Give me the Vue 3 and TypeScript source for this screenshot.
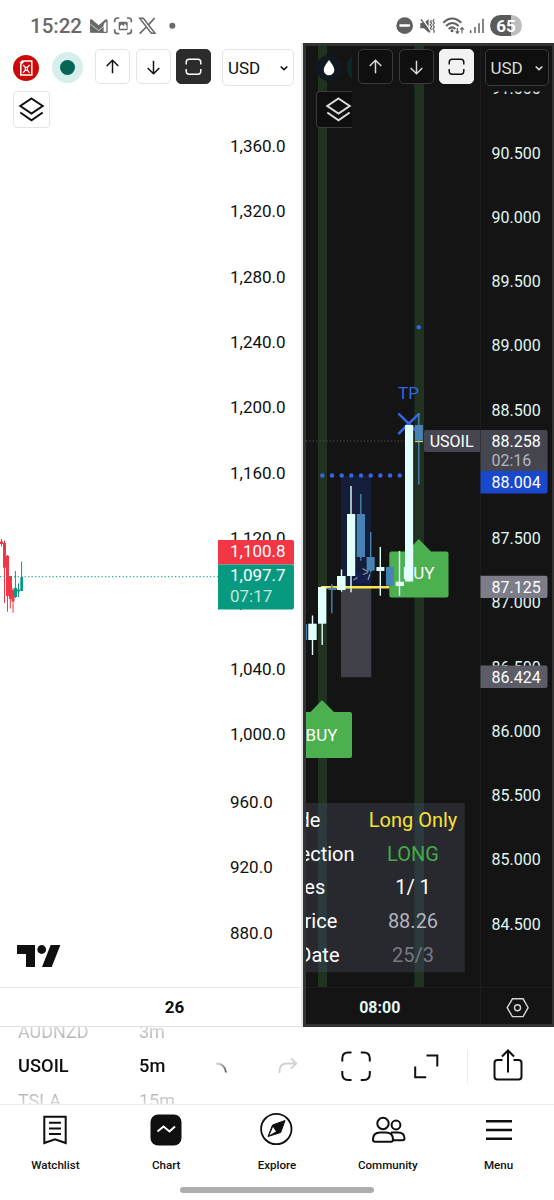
<script setup lang="ts">
interface Label { text: string; y: number }
interface Candle { x: number; left: number; width: number; top: number; bottom: number; high: number; low: number; tone: string }

const label = (text: string, y: number): Label => ({ text, y })
const candle = (x: number, left: number, width: number, top: number, bottom: number, high: number, low: number, tone: string): Candle =>
  ({ x, left, width, top, bottom, high, low, tone })

const goldScale: Label[] = [
  label('1,360.0', 146), label('1,320.0', 211.5), label('1,280.0', 277), label('1,240.0', 342.3),
  label('1,200.0', 407.7), label('1,160.0', 473), label('1,120.0', 538.3), label('1,080.0', 602.3),
  label('1,040.0', 669), label('1,000.0', 734.5), label('960.0', 802), label('920.0', 867.5), label('880.0', 933),
]

const oilScale: Label[] = ['91.000', '90.500', '90.000', '89.500', '89.000', '88.500', '', '87.500', '87.000', '86.500', '86.000', '85.500', '85.000', '84.500']
  .map((text, i) => label(text, 88.8 + i * 64.25))
  .filter((l) => l.text)

const goldCandles: Candle[] = [
  candle(1.5, 0, 3, 541.5, 544, 539, 546.5, 'down'),
  candle(4.5, 3, 3, 543, 567.7, 540.5, 603, 'down'),
  candle(7.5, 6, 3, 555.7, 596, 555, 611.7, 'down'),
  candle(10.3, 9, 3, 576, 599, 576, 608.5, 'down'),
  candle(13, 11.5, 3, 590, 601.5, 588, 612.7, 'down'),
  candle(15.4, 14, 3, 588, 597, 571, 598, 'up'),
  candle(18.5, 17, 3, 589.5, 591.5, 583.5, 597, 'up'),
  candle(21.6, 20.3, 2.7, 577, 591, 561.5, 591, 'up'),
]

const oilCandles: Candle[] = [
  candle(306.4, 306, 0.8, 624, 640, 624, 640, 'blue'),
  candle(312.5, 308.3, 8.4, 623.7, 640, 615.5, 655, 'mint'),
  candle(322.2, 318, 8.3, 587, 623.7, 587, 645, 'mint'),
  candle(331.8, 328.3, 8, 587.7, 590, 584, 613.3, 'blue'),
  candle(341.5, 337, 8.6, 576, 590, 569.5, 591.7, 'mint'),
  candle(351, 347, 8.2, 514, 576, 486, 592.3, 'mint'),
  candle(360.8, 356.8, 8.2, 514, 557, 494, 560.7, 'blue'),
  candle(370.7, 366.6, 8.1, 557, 570.7, 532, 572.7, 'blue'),
  candle(380.3, 376.4, 8, 567, 571, 547, 595.7, 'mint'),
  candle(390, 386, 7.8, 567, 585.7, 567, 585.7, 'blue'),
  candle(399.5, 395.7, 8.3, 581.7, 586, 551, 595.7, 'mint'),
  candle(409, 405, 8.2, 425, 581.5, 425, 581.5, 'mint'),
  candle(418.8, 414.9, 8, 425, 440.5, 413.3, 484.5, 'blue'),
]

const targetDots = Array.from({ length: 9 }, (_, i) => 322.3 + i * 9.68)

const stats = [
  { name: 'Mode', end: 320.3, value: 'Long Only', tone: 'yellow' },
  { name: 'Direction', end: 354.5, value: 'LONG', tone: 'green' },
  { name: 'Trades', end: 325.3, value: '1/ 1', tone: 'white' },
  { name: 'Price', end: 337.3, value: '88.26', tone: 'silver' },
  { name: 'Date', end: 339.5, value: '25/3', tone: 'grey' },
]

const symbols = ['AUDNZD', 'USOIL', 'TSLA']
const intervals = ['3m', '5m', '15m']
const tabs = ['Watchlist', 'Chart', 'Explore', 'Community', 'Menu']
</script>

<template>
  <div class="screen">
    <header class="status">
      <span class="clock">15:22</span>
      <svg class="notices" viewBox="264 30 276 96">
        <path d="M270 98V61q0-4 5-3l21 18 19-17q7-3 8 3v33q0 4-4 4z" fill="#696969" />
        <path d="M311 72v23h8V64z" fill="#fff" />
        <path d="M271 72l25 20 22-19" fill="none" stroke="#fff" stroke-width="2" />
        <g fill="none" stroke="#696969" stroke-width="5">
          <path d="M344 67v-5q0-8 8-8h6M381 54h5q8 0 8 8v5M394 88v5q0 8-8 8h-5M358 101h-6q-8 0-8-8v-5" />
        </g>
        <rect x="356" y="65" width="27" height="26" rx="4" fill="#696969" />
        <path d="M360 86v-7l6-6 5 6 4-9 5 9v7z" fill="#fff" />
        <path d="M419 55h11l35 45h-11z" fill="none" stroke="#696969" stroke-width="4.5" />
        <path d="M464 54l-20 22M439 81l-20 20" stroke="#696969" stroke-width="5" />
        <circle cx="517" cy="77" r="9" fill="#696969" />
      </svg>
      <svg class="signals" viewBox="300 30 270 96">
        <circle cx="326" cy="77" r="25" fill="#5f5f5f" />
        <rect x="310" y="73" width="32" height="7" rx="2" fill="#fff" />
        <path d="M373 69h11l14-12v41l-14-13h-11z" fill="#5f5f5f" />
        <path d="M378 56l27 37" stroke="#fff" stroke-width="4" />
        <path d="M375 58l27 39" stroke="#5f5f5f" stroke-width="4.5" />
        <path d="M407 60l-4 5 4 5-4 5 4 5-4 5 4 5M415 57l-4 6 4 6-4 6 4 6-4 6 4 6-2 5" fill="none" stroke="#5f5f5f" stroke-width="3.5" />
        <g fill="none" stroke="#5f5f5f" stroke-width="6">
          <path d="M442 68q26-25 54 0" />
          <path d="M450 78q19-18 38 0" />
          <path d="M458 87q10-10 20 0" />
        </g>
        <circle cx="468" cy="92" r="4.500" fill="#5f5f5f" />
        <path d="M484 84v15M479 94l5 6 5-6M498 100V83M493 89l5-6 6 6" fill="none" stroke="#5f5f5f" stroke-width="3.5" />
        <path d="M524 91v8M537 81v18M549 70v29M561 56v43" stroke="#5f5f5f" stroke-width="4.500" />
      </svg>
      <span class="battery">65</span>
    </header>

    <main class="charts">
      <section class="pane light">
        <svg class="plot" viewBox="0 43 301 984">
          <g v-for="c in goldCandles" :key="c.x" :class="c.tone">
            <rect :x="c.x - 0.5" :y="c.high" width="1" :height="c.low - c.high" />
            <rect :x="c.left" :y="c.top" :width="c.width" :height="c.bottom - c.top" />
          </g>
          <path class="now" d="M0 576.700H218" />
          <text v-for="l in goldScale" :key="l.text" class="tick" x="230" :y="l.y + 5.600">{{ l.text }}</text>
          <path d="M218 540h74a2 2 0 0 1 2 2v22.5h-76z" fill="#f23645" />
          <path d="M218 564.5h74a2 2 0 0 1 2 2v41a2 2 0 0 1-2 2h-74z" fill="#089981" />
          <text class="tick on" x="230" y="556.500">1,100.8</text>
          <text class="tick on" x="230" y="581.200">1,097.7</text>
          <text class="tick pale" x="230" y="601.500">07:17</text>
          <g fill="#0f0f0f">
            <path d="M17 945h18v22h-9v-13h-9zM50.7 945h9.7l-8.7 22h-9.7z" />
            <circle cx="41.7" cy="949.5" r="4.4" />
          </g>
          <path d="M0 987.5H301" stroke="#e4e4e6" />
          <text class="time" x="174.5" y="1013.3">26</text>
        </svg>
        <div class="overlay">
          <svg class="coin" viewBox="0 0 26 26">
            <circle cx="13" cy="13" r="13" fill="#cc0808" />
            <path d="M7.800 9.500l3-3.500h8v14h-11z" fill="none" stroke="#fff" stroke-width="1.500" />
            <path d="M7 8.200l2.800-2.700" stroke="#fff" stroke-width="1.500" />
            <path d="M10 10l2.300 2.300v2.900L10 17.800M16.700 10l-2.300 2.300v2.900l2.300 2.600M12 12.300h2.700M12 15.300h2.700" fill="none" stroke="#fff" stroke-width="1.200" />
          </svg>
          <span class="market"><i></i></span>
          <span class="btn"><svg viewBox="0 0 34 34"><path d="M17 24V10.500M11 16.500l6-6 6 6" /></svg></span>
          <span class="btn"><svg viewBox="0 0 34 34"><path d="M17 11v13.500M11 18.500l6 6 6-6" /></svg></span>
          <span class="btn active"><svg viewBox="0 0 34 34"><path d="M9.500 15v-2.500q0-3 3-3h9q3 0 3 3V15M9.500 19.500V22q0 3 3 3h9q3 0 3-3v-2.500" /></svg></span>
          <span class="currency">USD<svg viewBox="0 0 10 10"><path d="M1.700 3.500L5 6.600l3.300-3.100" /></svg></span>
        </div>
        <span class="layers"><svg viewBox="0 0 37 37"><path d="M18.500 7.500L29.700 15l-11.200 7.500L7.300 15zM7.300 21.500l11.200 7.800 11.200-7.800" /></svg></span>
      </section>

      <section class="pane dark">
        <svg class="plot" viewBox="306 46 246 978">
          <path d="M480.500 46V1024M306 987.500H552" stroke="#1d1d1d" />
          <path d="M318 46h9v941h-9zM414.300 46h9.700v941h-9.700z" fill="#203321" />
          <path d="M306 441H415" stroke="#55555b" stroke-dasharray="1.200 2.200" />
          <rect x="341" y="475.500" width="30.300" height="112" fill="#141e3b" />
          <rect x="341" y="587" width="30.300" height="90.300" fill="#404148" />
          <rect x="356" y="573" width="15" height="10" fill="#17215a" opacity=".6" />
          <path d="M321 587.200h68.500" stroke="#fbe54a" stroke-width="2.600" />
          <path d="M389.300 553.500a2 2 0 0 1 2-2H407L418.700 539 431 551.500h15.500a2 2 0 0 1 2 2v42a2 2 0 0 1-2 2h-55.200a2 2 0 0 1-2-2z" fill="#4caf50" />
          <text class="call" x="418.500" y="579">BUY</text>
          <path d="M306 712h4.500L322 700l12 12h16a2 2 0 0 1 2 2v42a2 2 0 0 1-2 2h-44z" fill="#4caf50" />
          <text class="call" x="321.500" y="740.700">BUY</text>
          <path d="M398.300 413.300l21 20.700M419.300 413.300l-21 20.700" stroke="#3763e6" stroke-width="2.500" />
          <g v-for="c in oilCandles" :key="c.x" :class="c.tone">
            <rect :x="c.x - 0.7" :y="c.high" width="1.400" :height="c.low - c.high" />
            <rect :x="c.left" :y="c.top" :width="c.width" :height="c.bottom - c.top" />
          </g>
          <path d="M353.500 580l4-2.500M362.500 568.500l6 3.500M363 574.500l5-2M370 574l-2 6" stroke="#8b93ad" stroke-width="1.200" />
          <path d="M415 441.500h8" stroke="#c8d66b" stroke-width="1.300" />
          <g fill="#3763e6">
            <circle v-for="x in targetDots" :key="x" :cx="x" cy="475.500" r="2.200" />
            <circle cx="418.700" cy="327.300" r="2.200" />
          </g>
          <text class="call target" x="408.500" y="398.500">TP</text>

          <rect x="306" y="803" width="158.700" height="169.300" fill="#28282f" />
          <path d="M318 803h9v169.300h-9zM414.300 803h9.700v169.300h-9.700z" fill="#2b3a3c" />
          <g v-for="(s, i) in stats" :key="s.name" class="stat">
            <text class="name" :x="s.end" :y="826.700 + i * 33.800">{{ s.name }}</text>
            <text :class="s.tone" x="413" :y="826.700 + i * 33.800">{{ s.value }}</text>
          </g>

          <text v-for="l in oilScale" :key="l.text" class="tick" x="491.500" :y="l.y + 5.500">{{ l.text }}</text>
          <rect x="481" y="46" width="71" height="45.500" fill="#141414" />
          <path d="M426 430h54v22h-54a2 2 0 0 1-2-2v-18a2 2 0 0 1 2-2z" fill="#464650" />
          <path d="M480.500 430h65a2 2 0 0 1 2 2v39h-67z" fill="#464650" />
          <path d="M480.500 471h67v20.500a2 2 0 0 1-2 2h-65z" fill="#1848cc" />
          <path d="M480.500 575.700h65a2 2 0 0 1 2 2v18.200a2 2 0 0 1-2 2h-65z" fill="#7d7d89" />
          <path d="M480.500 665.500h65a2 2 0 0 1 2 2v18.500a2 2 0 0 1-2 2h-65z" fill="#5c5c67" />
          <text class="tick on" x="429.700" y="447">USOIL</text>
          <text class="tick on" x="491.500" y="447">88.258</text>
          <text class="tick muted" x="491.500" y="465.700">02:16</text>
          <text class="tick on" x="491.500" y="488.200">88.004</text>
          <text class="tick on" x="491.500" y="593">87.125</text>
          <text class="tick on" x="491.500" y="683">86.424</text>
          <text class="time" x="379.800" y="1012.500">08:00</text>
          <path d="M507.200 1007.700l5.200-8.900h10.700l5 8.900-5 8.900h-10.700z" fill="none" stroke="#d6d6d6" stroke-width="1.400" />
          <circle cx="517.500" cy="1007.700" r="3" fill="none" stroke="#d6d6d6" stroke-width="1.400" />
        </svg>
        <div class="overlay">
          <div class="legend">
            <svg class="coin" viewBox="0 0 26 26">
              <circle cx="13" cy="13" r="13" fill="#10191f" />
              <path d="M13 5q5.300 6.500 5.300 10a5.300 5.300 0 0 1-10.600 0Q7.700 11.500 13 5z" fill="#fff" />
            </svg>
            <span class="market"></span>
          </div>
          <span class="btn"><svg viewBox="0 0 34 34"><path d="M17 24V10.500M11 16.500l6-6 6 6" /></svg></span>
          <span class="btn"><svg viewBox="0 0 34 34"><path d="M17 11v13.500M11 18.500l6 6 6-6" /></svg></span>
          <span class="btn active"><svg viewBox="0 0 34 34"><path d="M9.500 15v-2.500q0-3 3-3h9q3 0 3 3V15M9.500 19.500V22q0 3 3 3h9q3 0 3-3v-2.500" /></svg></span>
          <span class="currency">USD<svg viewBox="0 0 10 10"><path d="M1.700 3.500L5 6.600l3.300-3.100" /></svg></span>
        </div>
        <span class="layers"><svg viewBox="0 0 37 37"><path d="M22.500 7.500L33.700 15l-11.200 7.500L11.300 15zM11.300 21.500l11.200 7.800 11.200-7.800" /></svg></span>
      </section>
    </main>

    <section class="tools">
      <div class="picker"><span v-for="s in symbols" :key="s">{{ s }}</span></div>
      <div class="picker"><span v-for="s in intervals" :key="s">{{ s }}</span></div>
      <svg viewBox="-20 -20 40 40">
        <defs><linearGradient id="spin" x1="0" y1="0" x2="1" y2="1"><stop offset="0" stop-color="#ddd" /><stop offset="1" stop-color="#555" /></linearGradient></defs>
        <path d="M-5-2.500Q4-2.500 5 6.500" fill="none" stroke="url(#spin)" stroke-width="1.800" />
      </svg>
      <svg viewBox="-20 -20 40 40"><path d="M-8.500 7v-2q0-7.500 7.500-7.500H8M3-7.500l5.300 5L3 2.700" fill="none" stroke="#d2d2d2" stroke-width="1.800" /></svg>
      <svg viewBox="-20 -20 40 40"><path d="M-13.700-4.500v-3q0-6 6-6h3.200M4.800-13.500h3q6 0 6 6v3M13.800 5v3q0 6-6 6h-3M-4.500 14h-3.200q-6 0-6-6V5" fill="none" stroke="#0f0f0f" stroke-width="2" /></svg>
      <svg viewBox="-20 -20 40 40"><path d="M.5-10.500h10.800V.5M-10.800.5v10.800H.2" fill="none" stroke="#0f0f0f" stroke-width="2" /></svg>
      <div class="share"><svg viewBox="-20 -20 40 40"><path d="M0 6.500V-15M-6-9.500l6-6 6 6M-5.500-6h-5q-3 0-3 3v13.500q0 3 3 3h21q3 0 3-3V-3q0-3-3-3h-5" fill="none" stroke="#0f0f0f" stroke-width="2" /></svg></div>
    </section>

    <nav class="tabs">
      <div v-for="t in tabs" :key="t" class="tab">
        <svg viewBox="-18 -18 36 36" fill="none" stroke="#0f0f0f" stroke-width="2">
          <template v-if="t === 'Watchlist'">
            <path d="M-10.700-13.300h21.400V13L0 9.300-10.700 13zM-6-7.300H6M-6-1.600H6M-6 4.100H6" />
          </template>
          <template v-else-if="t === 'Chart'">
            <rect x="-15.500" y="-15.500" width="31" height="31" rx="7.500" fill="#0f0f0f" stroke="none" />
            <path d="M-8.500 1.500l6-5 6 5 5.500-5" stroke="#fff" />
          </template>
          <template v-else-if="t === 'Explore'">
            <circle cx="-.7" cy="-1" r="15.200" stroke-width="1.800" />
            <path d="M8-9.500L3.700 2.500-9 6.500-4.500-5z" fill="#0f0f0f" stroke-width="1" />
            <path d="M-4-3L-7.500 5.300-1 1.500z" fill="#fff" stroke="none" />
          </template>
          <template v-else-if="t === 'Community'">
            <circle cx="-5" cy="-6.500" r="5.700" />
            <circle cx="8" cy="-5" r="4.400" />
            <path d="M-15 9.500Q-15 2.500-8 2.500h6Q5 2.500 5 9.500q0 2.200-2 2.200h-16q-2 0-2-2.200zM3 2.500h7q6.500 0 6.500 6 0 1.700-2 1.700H5" />
          </template>
          <path v-else d="M-13-8.700h26M-13 0h26M-13 8.700h26" stroke-width="2.400" />
        </svg>
        <span>{{ t }}</span>
      </div>
      <i class="home"></i>
    </nav>
  </div>
</template>

<style>
html, body { margin: 0; background: #fff; }
</style>

<style scoped>
.screen { width: 554px; height: 1200px; display: flex; flex-direction: column; overflow: hidden; background: #fff; font-family: Roboto, "Liberation Sans", sans-serif; color: #0f0f0f; }
svg { display: block; flex: none; }

.status { height: 43px; box-sizing: border-box; padding: 10px 32px 0 30px; display: flex; align-items: flex-start; }
.clock { width: 58px; font-size: 20.5px; line-height: 33px; font-weight: 500; color: #696969; }
.notices { width: 92px; height: 32px; }
.signals { width: 90px; height: 32px; margin-left: auto; }
.battery { width: 32px; height: 21px; margin: 5px 0 0 4px; border-radius: 11px; background: linear-gradient(90deg, #5a5a5a 66%, #bdbdbd 66%); color: #fff; font-size: 17px; font-weight: 700; line-height: 22px; text-align: center; }

.charts { height: 984px; display: flex; gap: 2px; background: #e6e6e6; }
.pane { position: relative; box-sizing: border-box; overflow: hidden; }
.light { width: 301px; background: #fff; box-shadow: inset 0 -1px #e0e0e3; }
.dark { width: 251px; background: #141414; border: 3px solid #333; border-right-width: 2px; }
.plot { width: 100%; height: 100%; }

.tick { font-size: 17px; fill: #0f0f0f; }
.dark .tick { font-size: 16px; fill: #e0f7f5; }
.plot .tick.on, .dark .tick.on { fill: #fff; }
.plot .tick.pale { fill: #c0e6df; }
.dark .tick.muted { fill: #b4b4bc; }
.time { font-size: 17px; font-weight: 700; text-anchor: middle; fill: #0f0f0f; }
.dark .time { font-size: 16px; fill: #e0f7f5; }
.now { stroke: #089981; stroke-dasharray: 1.3 2.2; }
.down { fill: #f23645; }
.up { fill: #089981; }
.mint { fill: #e0fffd; }
.blue { fill: #4682b4; }
.call { font-size: 17px; fill: #fff; text-anchor: middle; }
.target { fill: #3763e6; }
.stat text { font-size: 20px; text-anchor: middle; fill: #fff; }
.stat .name { text-anchor: end; }
.stat .yellow { fill: #f7e13b; }
.stat .green { fill: #43ab49; }
.stat .silver { fill: #b3b3bd; }
.stat .grey { fill: #787882; }

.overlay { position: absolute; top: 6px; left: 13px; display: flex; align-items: flex-start; }
.coin { width: 26px; height: 26px; margin-top: 6px; }
.market { flex: none; width: 31px; height: 31px; margin: 3px 12px 0 13px; border-radius: 50%; background: #d6efeb; display: flex; align-items: center; justify-content: center; }
.market i { width: 15px; height: 15px; border-radius: 50%; background: #056656; }
.btn { width: 35px; height: 35px; margin-right: 5.5px; box-sizing: border-box; border: 1px solid #e3e3e6; border-radius: 5px; background: #fff; }
.btn svg { width: 33px; height: 33px; fill: none; stroke: #0f0f0f; stroke-width: 1.5; }
.light .active { background: #2c2c2c; border-color: #2c2c2c; }
.light .active svg { stroke: #fff; }
.currency { width: 72px; height: 37px; margin-left: 5.5px; padding: 0 4px 0 5px; box-sizing: border-box; border: 1px solid #e3e3e6; border-radius: 5px; background: #fff; display: flex; align-items: center; justify-content: space-between; font-size: 17px; }
.currency svg { width: 10px; height: 10px; fill: none; stroke: #0f0f0f; stroke-width: 1.6; }
.layers { position: absolute; top: 48px; left: 13px; width: 37px; height: 37px; box-sizing: border-box; border: 1px solid #e3e3e6; border-radius: 4px; background: #fff; }
.layers svg { width: 37px; height: 37px; margin: -1px; fill: none; stroke: #0f0f0f; stroke-width: 2; }

.dark .overlay { top: 3px; left: 10px; }
.legend { width: 36px; margin-right: 6px; display: flex; overflow: hidden; }
.legend .market { margin: 3px 0 0 5px; background: #0b2824; }
.dark .btn { background: #0f0f0f; border-color: #3b3b3b; }
.dark .btn svg, .dark .currency svg, .dark .layers svg { stroke: #dbdbdb; }
.dark .btn.active { background: #f2f2f2; border-color: #f2f2f2; }
.dark .btn.active svg { stroke: #0f0f0f; }
.dark .currency { width: 64px; margin-left: 5px; background: #0f0f0f; border-color: #3b3b3b; color: #dbdbdb; }
.dark .layers { top: 45px; left: 10px; width: 36px; overflow: hidden; background: #0f0f0f; border-color: #3b3b3b; border-right: 0; border-radius: 4px 0 0 4px; }

.tools { height: 78px; box-sizing: border-box; padding-left: 18px; border-bottom: 1px solid #ebebeb; display: grid; grid-template-columns: 121px 55px 54px 79px 58px 82px 81px; align-items: center; justify-items: center; }
.tools svg { width: 40px; height: 40px; }
.picker { justify-self: start; height: 77px; overflow: hidden; display: flex; flex-direction: column; justify-content: center; -webkit-mask-image: linear-gradient(rgba(0, 0, 0, .4), #000 25%, #000 75%, rgba(0, 0, 0, .4)); mask-image: linear-gradient(rgba(0, 0, 0, .4), #000 25%, #000 75%, rgba(0, 0, 0, .4)); }
.picker span { flex: none; height: 34.5px; line-height: 35.500px; font-size: 18px; color: #9a9a9a; }
.picker span:nth-child(2) { color: #0f0f0f; font-weight: 500; font-size: 18.300px; }
.share { width: 100%; height: 34px; box-sizing: border-box; border-left: 1px solid #ebebeb; display: flex; align-items: center; justify-content: center; }

.tabs { position: relative; height: 95px; display: grid; grid-template-columns: repeat(5, 1fr); }
.tab { display: flex; flex-direction: column; align-items: center; padding-top: 6.5px; font-size: 11.6px; font-weight: 500; line-height: 14px; }
.tab svg { width: 36px; height: 36px; margin-bottom: 10.5px; }
.home { position: absolute; left: 180px; bottom: 7.500px; width: 194px; height: 6px; border-radius: 3px; background: #adadad; }
</style>
